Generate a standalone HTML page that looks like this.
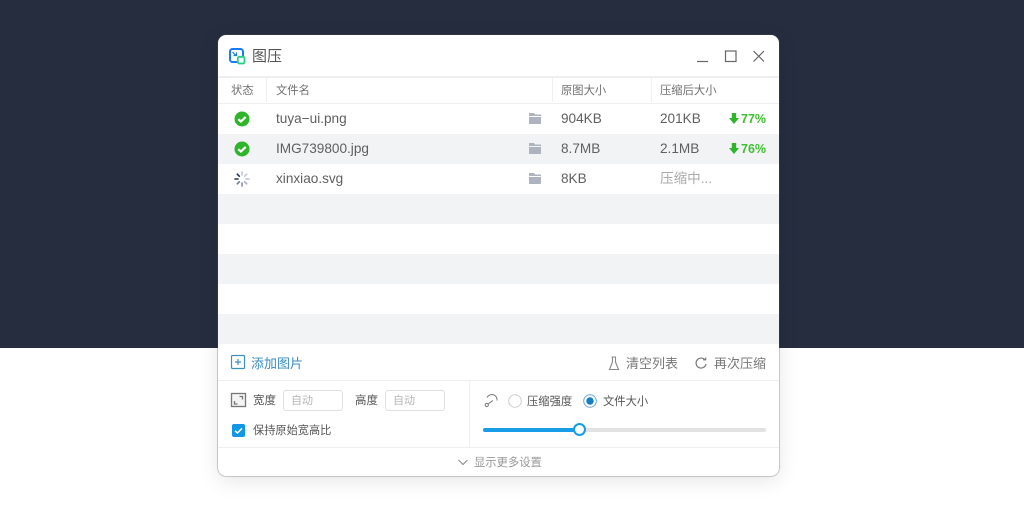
<!DOCTYPE html>
<html lang="zh"><head><meta charset="utf-8"><title>图压</title>
<style>
html,body{margin:0;padding:0;width:1024px;height:517px;overflow:hidden;background:#fff}
body{position:relative;font-family:"Liberation Sans","Noto Sans CJK SC",sans-serif;color:#666}
.bg{position:absolute;left:0;top:0;width:1024px;height:348px;background:#262d3f}
.win{position:absolute;left:218px;top:35px;width:561px;height:441px;background:#fff;border-radius:8px;box-shadow:0 0 1px 0.5px rgba(90,90,90,.55),0 5px 20px rgba(0,0,0,.10);overflow:hidden}
.inner{position:absolute;left:0;top:0;width:561px;height:441px;filter:blur(.3px)}
.t{position:absolute;white-space:nowrap;line-height:16px}
.abs{position:absolute}
.row{position:absolute;left:0;width:561px;height:30px}
.g{background:#f2f3f5}
.line{position:absolute;background:#eeeff1}
svg{position:absolute;overflow:visible}
.h{font-size:11.3px;color:#707070}
.f{font-size:13.6px;color:#5f5f5f}
.p{font-size:12.5px;font-weight:bold;color:#3fbf2f}
.inp{position:absolute;width:58px;height:19px;border:1px solid #dfdfdf;border-radius:3px;font-size:11px;color:#b5b5b5;line-height:21px;text-indent:7px;box-sizing:content-box}
</style></head><body>
<div class="bg"></div>
<div class="win"><div class="inner">
<svg style="left:11px;top:13px" width="18" height="18" viewBox="0 0 18 18"><rect x="1" y="1" width="13" height="13" rx="2.5" fill="#fff" stroke="#1a7bf0" stroke-width="2"/><path d="M3.500 4l3.500 3.500M7.500 4.500v3h-3" fill="none" stroke="#1a7bf0" stroke-width="1.200"/><rect x="8.800" y="8.800" width="6.700" height="6.700" rx="1.500" fill="#fff" stroke="#25d07f" stroke-width="1.800"/></svg>
<div class="t" style="left:34px;top:14px;font-size:15px;color:#555">图压</div>
<svg style="left:479px;top:14px" width="64" height="16" viewBox="0 0 64 16"><path d="M0 12.500H11" stroke="#666" stroke-width="1.200" fill="none"/><rect x="28.500" y="2" width="10.500" height="10.500" fill="none" stroke="#666" stroke-width="1.200"/><path d="M56.500 2L67 12.500M67 2L56.500 12.500" stroke="#666" stroke-width="1.200" fill="none"/></svg>

<div class="line" style="left:0;top:41px;width:561px;height:1.500px"></div>
<div class="line" style="left:0;top:68px;width:561px;height:1px"></div>
<div class="line" style="left:48px;top:43px;width:1px;height:24px"></div>
<div class="line" style="left:334px;top:43px;width:1px;height:24px"></div>
<div class="line" style="left:433px;top:43px;width:1px;height:24px"></div>
<div class="t h" style="left:13px;top:48px">状态</div>
<div class="t h" style="left:58px;top:48px">文件名</div>
<div class="t h" style="left:343px;top:48px">原图大小</div>
<div class="t h" style="left:442px;top:48px">压缩后大小</div>

<div class="row" style="top:69px"></div>
<div class="row g" style="top:99px"></div>
<div class="row g" style="top:159px"></div>
<div class="row g" style="top:219px"></div>
<div class="row g" style="top:279px"></div>

<svg style="left:16px;top:76px" width="16" height="16" viewBox="0 0 16 16"><circle cx="8" cy="8" r="7.500" fill="#2eb52a"/><path d="M4.300 8.200l2.600 2.300 4.800-4.600" fill="none" stroke="#fff" stroke-width="2.200"/></svg>
<svg style="left:16px;top:106px" width="16" height="16" viewBox="0 0 16 16"><circle cx="8" cy="8" r="7.500" fill="#2eb52a"/><path d="M4.300 8.200l2.600 2.300 4.800-4.600" fill="none" stroke="#fff" stroke-width="2.200"/></svg>
<svg style="left:16px;top:136px" width="16" height="16" viewBox="0 0 16 16" fill="none" stroke-width="1.700" stroke-linecap="round"><path d="M8 1v3" stroke="#c5cbd8"/><path d="M12.700 3.200l-2 2" stroke="#c5cbd8"/><path d="M15 8h-3" stroke="#c5cbd8"/><path d="M12.700 12.800l-2-2" stroke="#aab2c4"/><path d="M8 15v-3" stroke="#8d97ae"/><path d="M3.300 12.800l2-2" stroke="#6f7b97"/><path d="M1 8h3" stroke="#46536f"/><path d="M3.300 3.200l2 2" stroke="#2a3856"/></svg>

<div class="t f" style="left:58px;top:76px">tuya−ui.png</div>
<div class="t f" style="left:58px;top:106px">IMG739800.jpg</div>
<div class="t f" style="left:58px;top:136px">xinxiao.svg</div>

<svg style="left:311px;top:78px" width="12" height="12" viewBox="0 0 12 12"><path d="M0 0h5l1 1.500h6V3H0zM0 4h12V11H0z" fill="#aeb3bf"/></svg>
<svg style="left:311px;top:108px" width="12" height="12" viewBox="0 0 12 12"><path d="M0 0h5l1 1.500h6V3H0zM0 4h12V11H0z" fill="#aeb3bf"/></svg>
<svg style="left:311px;top:138px" width="12" height="12" viewBox="0 0 12 12"><path d="M0 0h5l1 1.500h6V3H0zM0 4h12V11H0z" fill="#aeb3bf"/></svg>

<div class="t f" style="left:343px;top:76px">904KB</div>
<div class="t f" style="left:343px;top:106px">8.7MB</div>
<div class="t f" style="left:343px;top:136px">8KB</div>
<div class="t f" style="left:442px;top:76px">201KB</div>
<div class="t f" style="left:442px;top:106px">2.1MB</div>
<div class="t f" style="left:442px;top:136px;color:#aaa">压缩中...</div>

<svg style="left:511px;top:78px" width="10" height="11" viewBox="0 0 10 11"><path d="M2.800 0h4.400v5H10L5 11 0 5h2.800z" fill="#2eb52a"/></svg>
<div class="t p" style="left:523px;top:76px">77%</div>
<svg style="left:511px;top:108px" width="10" height="11" viewBox="0 0 10 11"><path d="M2.800 0h4.400v5H10L5 11 0 5h2.800z" fill="#2eb52a"/></svg>
<div class="t p" style="left:523px;top:106px">76%</div>

<svg style="left:13px;top:320px" width="15" height="15" viewBox="0 0 15 15" fill="none" stroke="#3d8fc4" stroke-width="1.200"><rect x=".5" y=".5" width="13" height="13" rx="1"/><path d="M7 4v6M4 7h6"/></svg>
<div class="t" style="left:33px;top:320.500px;font-size:13px;color:#3a8cc0">添加图片</div>
<svg style="left:390px;top:321px" width="12" height="15" viewBox="0 0 12 15" fill="none" stroke="#888" stroke-width="1.100"><path d="M3.500 1H8M4.500 1v5L1.500 13.500H10.500L7.500 6V1"/></svg>
<div class="t" style="left:408px;top:320.500px;font-size:13px;color:#777">清空列表</div>
<svg style="left:477px;top:322px" width="12" height="13" viewBox="0 0 12 13" fill="none" stroke="#777" stroke-width="1.200"><path d="M10.200 3.200A5 5 0 1 0 11 7"/><path d="M8 2.800h2.700V.5"/></svg>
<div class="t" style="left:496px;top:320.500px;font-size:13px;color:#777">再次压缩</div>

<div class="line" style="left:0;top:345px;width:561px;height:1px"></div>
<div class="line" style="left:251px;top:346px;width:1px;height:66px"></div>
<div class="line" style="left:0;top:412px;width:561px;height:1px"></div>

<svg style="left:13px;top:358px" width="15" height="15" viewBox="0 0 15 15" fill="none" stroke="#777" stroke-width="1.300"><rect x=".5" y=".5" width="14" height="13" fill="#f4f4f4"/><path d="M3.500 8v3h3M8.500 3.500h3v3"/></svg>
<div class="t" style="left:35px;top:358px;font-size:11.500px;color:#555">宽度</div>
<div class="inp" style="left:65px;top:355px">自动</div>
<div class="t" style="left:137px;top:358px;font-size:11.500px;color:#555">高度</div>
<div class="inp" style="left:167px;top:355px">自动</div>
<div class="abs" style="left:14px;top:389px;width:13px;height:13px;background:#1296e8;border-radius:2px"></div>
<svg style="left:14px;top:389px" width="13" height="13" viewBox="0 0 13 13"><path d="M3 6.800l2.500 2.200 4.500-4.700" fill="none" stroke="#fff" stroke-width="1.500"/></svg>
<div class="t" style="left:35px;top:388px;font-size:11.200px;color:#555">保持原始宽高比</div>

<svg style="left:266px;top:358px" width="16" height="16" viewBox="0 0 16 16" fill="none" stroke="#777" stroke-width="1"><path d="M3 4.500C5 1 9 .8 11.500 3c1.300 1.300 1.700 3 1.500 4.500"/><path d="M9 7.500L4.500 10.700"/><circle cx="2.800" cy="12" r="1.600"/></svg>
<svg style="left:290px;top:359px" width="14" height="14" viewBox="0 0 14 14"><circle cx="7" cy="7" r="6.300" fill="#fff" stroke="#ccc" stroke-width="1"/></svg>
<div class="t" style="left:309px;top:359px;font-size:11.300px;color:#555">压缩强度</div>
<svg style="left:365px;top:359px" width="14" height="14" viewBox="0 0 14 14"><circle cx="7" cy="7" r="6.300" fill="#fff" stroke="#6aa7dc" stroke-width="1"/><circle cx="7" cy="7" r="3.700" fill="#127fc4"/></svg>
<div class="t" style="left:385px;top:359px;font-size:11.300px;color:#555">文件大小</div>

<div class="abs" style="left:265px;top:393px;width:283px;height:4px;background:#e2e2e2;border-radius:2px"></div>
<div class="abs" style="left:265px;top:393px;width:97px;height:4px;background:#189ce8;border-radius:2px"></div>
<div class="abs" style="left:355px;top:388px;width:13px;height:13px;box-sizing:border-box;background:#fff;border:2px solid #189ce8;border-radius:50%"></div>

<svg style="left:240px;top:424px" width="10" height="7" viewBox="0 0 10 7"><path d="M.5 1L5 5.500 9.500 1" fill="none" stroke="#888" stroke-width="1.100"/></svg>
<div class="t" style="left:256px;top:420px;font-size:11.300px;color:#999">显示更多设置</div>
</div></div>
</body></html>
